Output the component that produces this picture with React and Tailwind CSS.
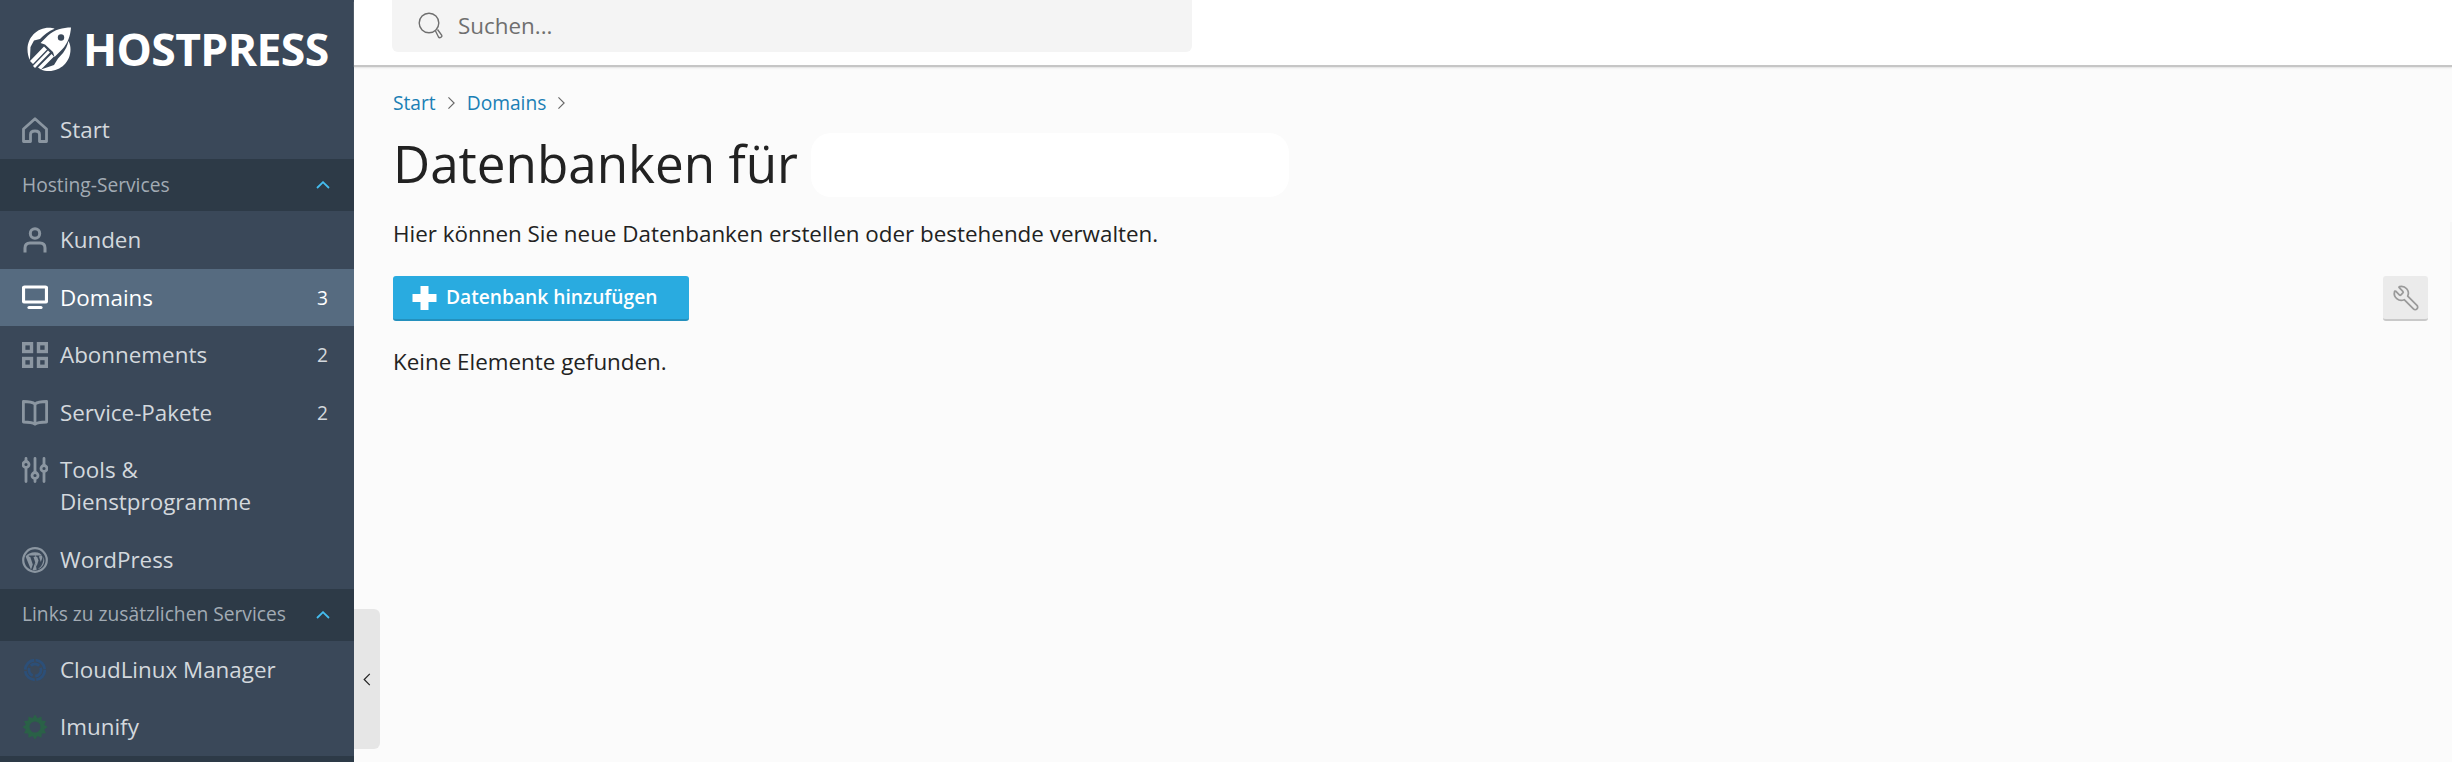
import React from "react";
import { Wrench } from "lucide-react";

const ico = "w-[26px] h-[26px] shrink-0";

const Home = () => (
  <svg viewBox="0 0 26 26" className={ico} fill="none" stroke="#8b96a1" strokeWidth="2.800">
    <path d="M1.500 24.500V12L13 1.800 24.500 12V24.500H17.500V17.500C17.500 15 15.500 14 13 14 10.500 14 8.500 15 8.500 17.500V24.500Z" strokeLinejoin="round" />
  </svg>
);
const User = () => (
  <svg viewBox="0 0 26 26" className={ico} fill="none" stroke="#8b96a1" strokeWidth="3">
    <circle cx="13" cy="6.500" r="4.700" />
    <path d="M3 25.500V21C3 17.500 5 16 8 16H18C21 16 23 17.500 23 21V25.500" />
  </svg>
);
const Monitor = () => (
  <svg viewBox="0 0 26 26" className={ico} fill="none" stroke="#ffffff">
    <rect x="1.500" y="2" width="23" height="15" rx="1" strokeWidth="3.200" />
    <path d="M7 22.500H19" strokeWidth="3.200" strokeLinecap="round" />
  </svg>
);
const Grid = () => (
  <svg viewBox="0 0 26 26" className={ico} fill="none" stroke="#8b96a1" strokeWidth="3.400">
    <rect x="1.700" y="1.700" width="7.800" height="7.800" />
    <rect x="16.500" y="1.700" width="7.800" height="7.800" />
    <rect x="1.700" y="16.500" width="7.800" height="7.800" />
    <rect x="16.500" y="16.500" width="7.800" height="7.800" />
  </svg>
);
const Book = () => (
  <svg viewBox="0 0 26 26" className={ico} fill="none" stroke="#8b96a1" strokeWidth="2.800">
    <path d="M13 4C10.500 2 5 1.500 1.400 1.500V22C5 22 10.500 22 13 24.300 15.500 22 21 22 24.600 22V1.500C21 1.500 15.500 2 13 4Z" strokeLinejoin="round" />
    <path d="M13 4V24.500" />
  </svg>
);
const Sliders = () => (
  <svg viewBox="0 0 26 26" className={ico} fill="none" stroke="#8b96a1" strokeWidth="2.800" strokeLinecap="round">
    <path d="M4 1.500V3.500M4 12V24.500M13 1.500V14.500M13 23V24.500M22 1.500V7.500M22 16V24.500" />
    <circle cx="4" cy="7.500" r="3" />
    <circle cx="13" cy="18.500" r="3" />
    <circle cx="22" cy="11.500" r="3" />
  </svg>
);
const Wp = () => (
  <svg viewBox="0 0 26 26" className={ico}>
    <circle cx="13" cy="13" r="11.800" fill="none" stroke="#8b96a1" strokeWidth="2.200" />
    <path d="M3.600 9.500L9 22.800 10.800 17.500 8.300 10 6.800 9.400V8.600H13.400V9.400L11.500 10 14.600 19.400 16.500 13.600 15.200 10 14 9.400V8.600H20.200C19 7 17 5.200 13 5.200 9 5.200 5.200 6.800 3.600 9.500ZM17 9.800L18.800 15 20.200 11.200C20.600 10.200 20.400 9.500 20.100 8.900L17.800 8.800ZM21.200 9.800C21.800 12.500 21.300 16 18.800 19.600L15.600 22.500C20 21.400 24.400 15.200 21.200 9.800ZM13.300 15.200L10.600 22.900C12 23.300 13.200 23.200 14.700 22.800Z" fill="#8b96a1" />
  </svg>
);
const Cloud = () => (
  <svg viewBox="0 0 26 26" className={ico} fill="none" stroke="#2c4f78">
    <circle cx="13" cy="13" r="9.800" strokeWidth="2.800" strokeDasharray="14 1.500" />
    <circle cx="13" cy="13" r="6" strokeWidth="2.800" strokeDasharray="9 2.500" />
  </svg>
);
const Imunify = () => (
  <svg viewBox="0 0 26 26" className={ico}>
    <path
      d="M13 .6L15.600 4.200 19.400 2.400 19.800 6.600 24 7 22.200 10.800 25.600 13 22.200 15.400 24 19.200 19.800 19.600 19.400 23.800 15.600 22 13 25.400 10.400 22 6.600 23.800 6.200 19.600 2 19.200 3.800 15.400 .4 13 3.800 10.800 2 7 6.200 6.600 6.600 2.400 10.400 4.200Z"
      fill="#2a6147"
    />
    <circle cx="13" cy="13" r="5.500" fill="#3a4859" />
  </svg>
);
const Chevron = () => (
  <svg viewBox="0 0 14 8" className="w-[14px] h-[8px]" fill="none" stroke="#44bdf0" strokeWidth="1.800">
    <path d="M1 7L7 1.200 13 7" />
  </svg>
);

const Row = ({ icon, label, count, active, tall }) => (
  <div
    className={
      "flex shrink-0 pl-[22px] pr-[26px] gap-[12px] " +
      (tall ? "py-[12.8px] h-[89.6px] items-start " : "h-[57.6px] items-center ") +
      (active ? "bg-[#566b80] text-white" : "text-[#d3d8dd]")
    }
  >
    <div className={tall ? "pt-[3px]" : ""}>{icon}</div>
    <span className="flex-1 text-[22.4px] leading-[32px]">{label}</span>
    {count && <span className="text-[19.2px] leading-[28px]">{count}</span>}
  </div>
);

const Group = ({ label }) => (
  <div className="h-[52.2px] shrink-0 bg-[#2d3a47] flex items-center justify-between pl-[22px] pr-[24px]">
    <span className="text-[19.2px] text-[#a2abb4]">{label}</span>
    <Chevron />
  </div>
);

export default function App() {
  return (
    <div
      className="relative flex h-screen overflow-hidden bg-[#fbfbfb] text-[#222222]"
      style={{ fontFamily: '"Open Sans", sans-serif' }}
    >
      <aside className="w-[354px] shrink-0 bg-[#3a4859] flex flex-col">
        <div className="h-[101.4px] shrink-0 flex items-center pl-[27px] gap-[12px] pb-[3px]">
          <svg viewBox="0 0 44 44" className="w-[44px] h-[44px] shrink-0">
            <path
              d="M22 .8C24 .8 26 1.100 27.600 1.800 21.500 4.300 17 8 13 12L7 13.500 3.500 20C3 30 3 33 3 33 1.300 30 .5 26.300 .5 22.500 .5 10.500 10 .8 22 .8ZM41.500 14C43 17 43.500 19.500 43.500 22.500 43.500 34.500 34 44 22 44 19 44 16.500 43.500 14 42.500L27 38 31 31.500 36 26C38.500 22.500 40.500 18.500 41.500 14Z"
              fill="#ffffff"
            />
            <path
              d="M44 .5C43.500 8 41 16.500 35 22.500L27.500 30 26 25 18 17.500 13.500 16 21 8.500C27.500 2.500 36 .5 44 .5Z"
              fill="#ffffff"
            />
            <circle cx="34" cy="10.500" r="3.200" fill="#3a4859" />
            <path
              d="M17 19.500L20 22.500 6 37 3 34ZM21 23.500L23 25.500 8 41 6 39ZM24.500 27L27 29.500 14 42.500 11 40.500Z"
              fill="#ffffff"
            />
          </svg>
          <span className="text-[44.5px] leading-none font-bold text-white tracking-[-0.6px]">HOSTPRESS</span>
        </div>
        <Row icon={<Home />} label="Start" />
        <Group label="Hosting-Services" />
        <Row icon={<User />} label="Kunden" />
        <Row icon={<Monitor />} label="Domains" count="3" active />
        <Row icon={<Grid />} label="Abonnements" count="2" />
        <Row icon={<Book />} label="Service-Pakete" count="2" />
        <Row icon={<Sliders />} label={<>Tools &amp;<br />Dienstprogramme</>} tall />
        <Row icon={<Wp />} label="WordPress" />
        <Group label="Links zu zusätzlichen Services" />
        <Row icon={<Cloud />} label="CloudLinux Manager" />
        <Row icon={<Imunify />} label="Imunify" />
        <div className="flex-1 bg-[#2d3a47]" />
      </aside>

      <main className="flex-1 min-w-0 flex flex-col relative">
        <header className="h-[65px] shrink-0 bg-white shadow-[0_2px_1px_#c6c6c6,0_3px_2px_rgba(0,0,0,0.08)] pl-[38px]">
          <div className="w-[800px] h-[52px] bg-[#f4f4f4] rounded-b-[6px] flex items-center pl-[26px] gap-[14px]">
            <svg viewBox="0 0 26 28" className="w-[26px] h-[28px]" fill="none" stroke="#6f6f6f" strokeWidth="1.400">
              <circle cx="11" cy="11" r="9.800" />
              <path d="M17.500 19L20.500 25C21.500 26.500 24.500 25 23.800 23.300L19.500 17.500" />
            </svg>
            <span className="text-[22.4px] text-[#6f6f6f]">Suchen...</span>
          </div>
        </header>

        <div className="pl-[39px] pr-[24px] pt-[24px] flex-1 flex flex-col">
          <nav className="flex items-center h-[28px] text-[19.2px] text-[#1a7fb5]">
            <span>Start</span>
            <svg viewBox="0 0 10 16" className="w-[9px] h-[14px] mx-[11px]" fill="none" stroke="#666666" strokeWidth="1.300"><path d="M1.500 1.500L8 8 1.500 14.500" /></svg>
            <span>Domains</span>
            <svg viewBox="0 0 10 16" className="w-[9px] h-[14px] mx-[11px]" fill="none" stroke="#666666" strokeWidth="1.300"><path d="M1.500 1.500L8 8 1.500 14.500" /></svg>
          </nav>
          <div className="flex items-center mt-[13px] h-[66px]">
            <h1 className="text-[51.2px] leading-[66px] font-normal">Datenbanken für</h1>
            <div className="ml-[13px] mt-[4px] w-[478px] h-[64px] bg-white rounded-[20px]" />
          </div>
          <p className="mt-[22px] text-[22.4px] leading-[32px]">Hier können Sie neue Datenbanken erstellen oder bestehende verwalten.</p>
          <div className="mt-[26px] flex items-start justify-between">
            <button className="w-[296px] h-[45px] bg-[#29abe0] border-b-2 border-[#2490bd] rounded-[3px] flex items-center pl-[19px] gap-[9px] text-white text-[19.2px] font-semibold">
              <svg viewBox="0 0 24 24" className="w-[25px] h-[24px]" fill="#ffffff">
                <path d="M8 0H16V8H24V16H16V24H8V16H0V8H8Z" />
              </svg>
              Datenbank hinzufügen
            </button>
            <button className="w-[45px] h-[45px] bg-[#ebebeb] border-b-2 border-[#c9c9c9] rounded-[3px] flex items-center justify-center">
              <Wrench className="w-[28px] h-[28px] text-[#9a9a9a] -scale-x-100" strokeWidth={1.5} />
            </button>
          </div>
          <p className="mt-[25px] text-[22.4px] leading-[32px]">Keine Elemente gefunden.</p>
        </div>

        <div className="absolute left-0 top-[609px] w-[26px] h-[140px] bg-[#e6e6e6] rounded-r-[6px] flex items-center justify-center">
          <svg viewBox="0 0 8 14" className="w-[8px] h-[13px]" fill="none" stroke="#222222" strokeWidth="1.300"><path d="M7 1L1 7 7 13" /></svg>
        </div>
        <div className="absolute right-0 top-[222px] w-[2px] h-[138px] bg-[#f7f7f7]" />
      </main>
    </div>
  );
}
